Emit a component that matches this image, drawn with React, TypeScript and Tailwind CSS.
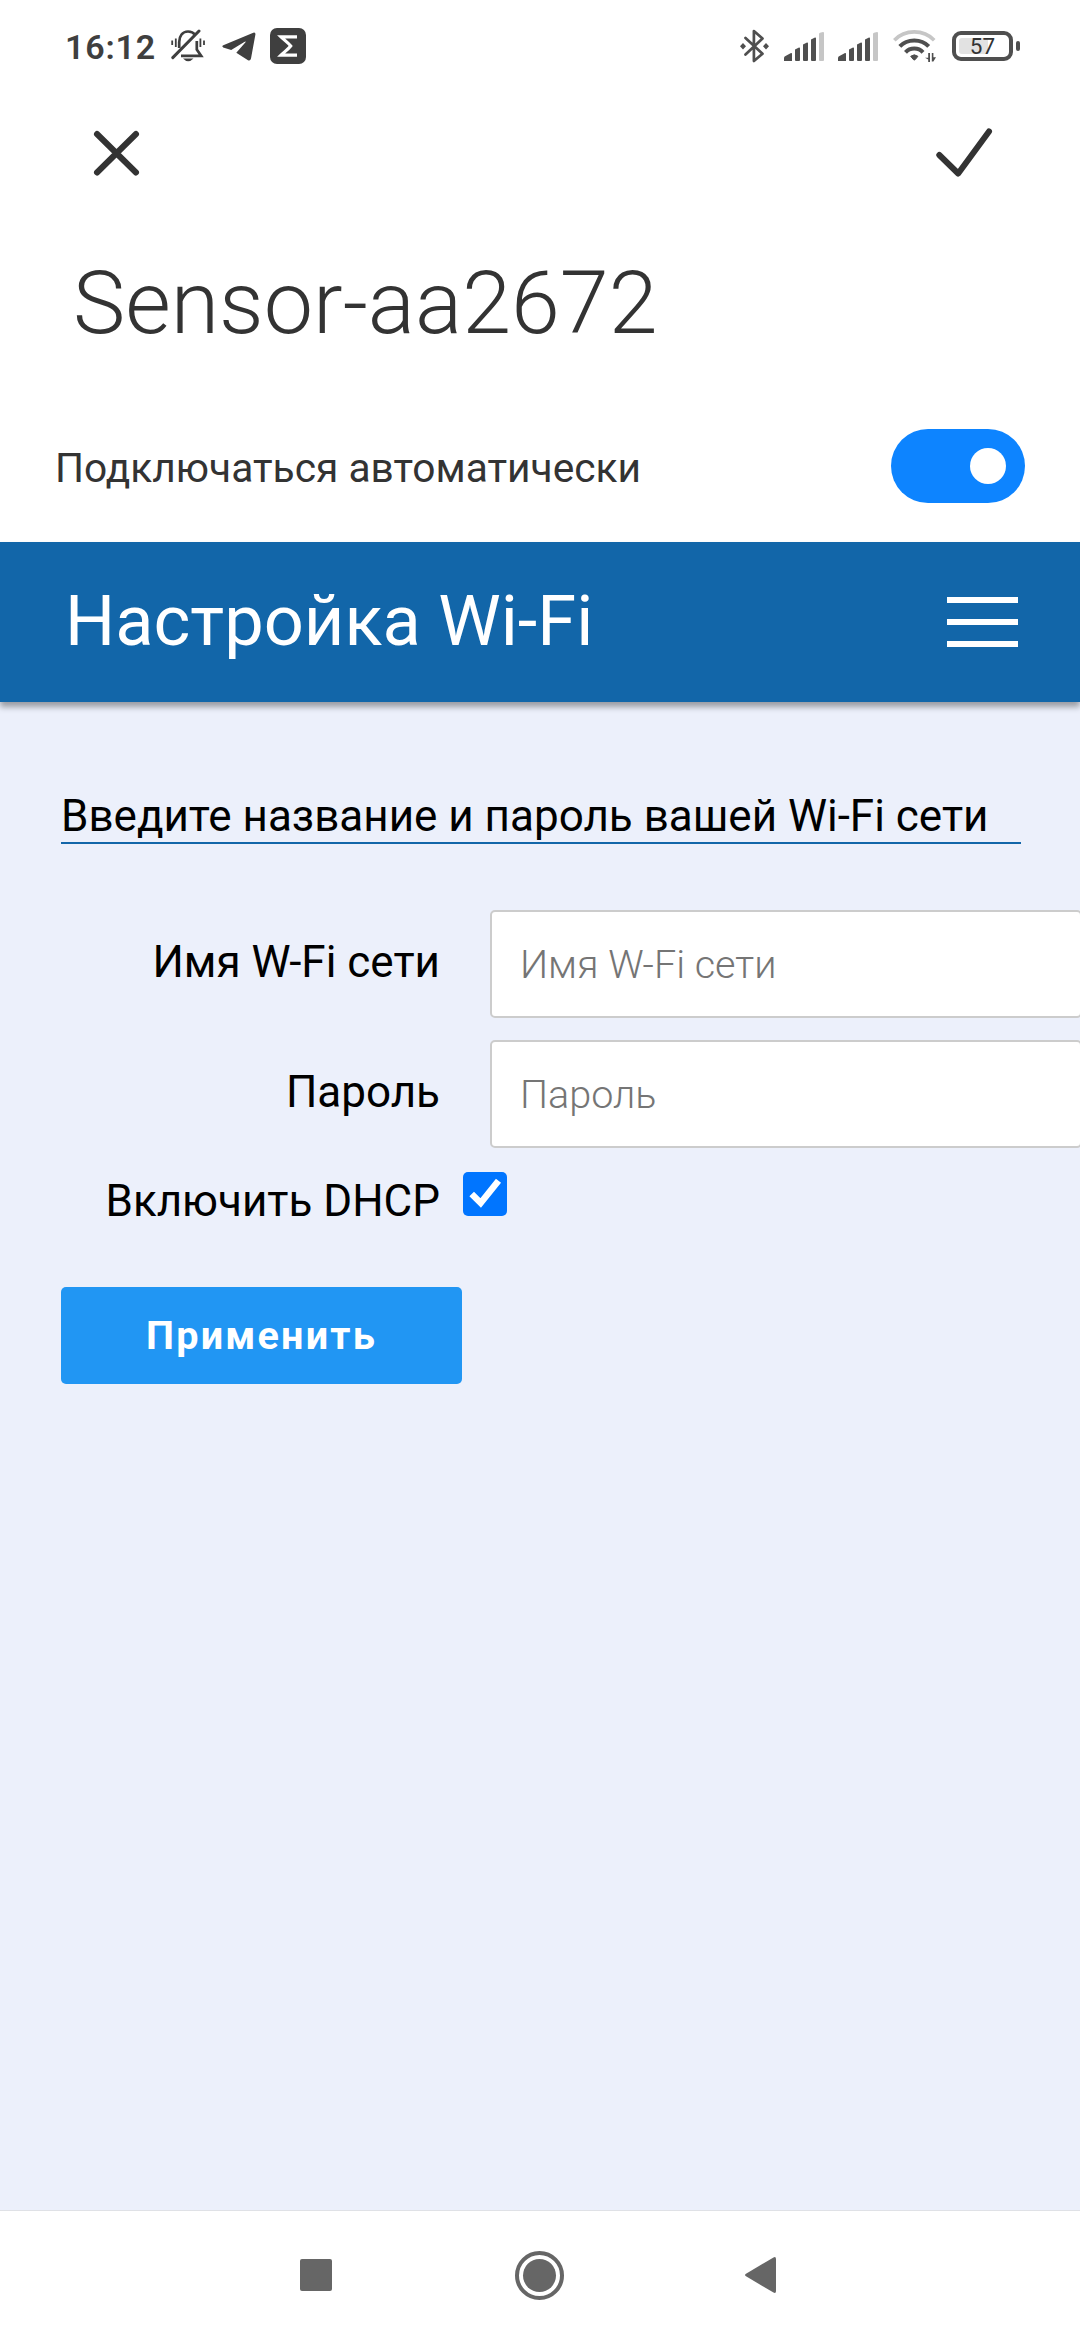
import { useState } from 'react';

const SIGNAL_BARS = [
  'M0 29 v-3 q0 -1.500 1.500 -2 l5.500 -3 q1 -.5 1 1 v7 z',
  'M11 17.500 l4 -2 q1 -.3 1 1 V28 q0 1 -1 1 h-3 q-1 0 -1 -1 z',
  'M19 12.500 l4 -2 q1 -.3 1 1 V28 q0 1 -1 1 h-3 q-1 0 -1 -1 z',
  'M27 7.500 l4 -2 q1 -.3 1 1 V28 q0 1 -1 1 h-3 q-1 0 -1 -1 z',
];

function BellOffIcon() {
  return (
    <svg width="34" height="34" viewBox="0 0 34 34" fill="none" stroke="#3f3f3f">
      <path d="M8.200 19 V13 C8.200 7 11.500 2.500 17 2.500 C20.300 2.500 22.700 3.800 24.300 5.800" strokeWidth="2.700" />
      <path d="M25.800 12 V20.500 L30.200 26.900 H10" strokeWidth="2.700" />
      <path d="M28 2 L1.800 28.600" strokeWidth="3" strokeLinecap="round" />
      <path d="M4.800 9.500 V18 M1.200 11.500 V16 M29.400 9.500 V18 M33 11.500 V16" strokeWidth="1.800" />
      <path d="M12 29.500 H22.500 Q17.200 35 12 29.500 Z" fill="#3f3f3f" stroke="none" />
    </svg>
  );
}

function TelegramIcon() {
  return (
    <svg width="34" height="29" viewBox="0 0 34 29" fill="#3f3f3f">
      <path d="M1.300 13.200 L31.300 0.700 Q33.700 0 33.400 2.600 L29 26.600 Q28.300 29.300 26 28.300 L14.300 20.700 L23.300 10.600 Q24.500 8.800 22.300 9.900 L9.200 18 L1.200 15.400 Q-.6 14.300 1.300 13.200 Z" />
    </svg>
  );
}

function SigmaIcon() {
  return (
    <svg width="36" height="36" viewBox="0 0 36 36">
      <rect width="36" height="36" rx="7" fill="#3f3f3f" />
      <path d="M27 8.900 H11 C14.500 12.300 18 14.500 20.700 18 C18 21.500 14.500 23.700 11 27.100 H27" fill="none" stroke="#fff" strokeWidth="3.200" />
    </svg>
  );
}

function BluetoothIcon() {
  return (
    <svg width="29" height="34" viewBox="0 0 29 34" fill="none" stroke="#4f4f4f" strokeWidth="2.700" strokeLinejoin="round">
      <path d="M5.500 9 L22.500 24.800 L13.900 32 V2 L22.500 9.500 L5.500 25.500" strokeLinecap="round" />
      <path d="M3 14 L6 17.200 L3 20.400 L0 17.200 Z M26 14 L29 17.200 L26 20.400 L23 17.200 Z" fill="#4f4f4f" stroke="none" />
    </svg>
  );
}

function SignalIcon() {
  return (
    <svg width="40" height="29" viewBox="0 0 40 29" fill="#4f4f4f">
      {SIGNAL_BARS.map((d) => (
        <path key={d} d={d} />
      ))}
      <path d="M35 2 Q35 1 36 .7 L39 0 Q40 0 40 1 V28 Q40 29 39 29 H36 Q35 29 35 28 Z" fill="#c6c6c6" />
    </svg>
  );
}

function WifiIcon() {
  return (
    <svg width="43" height="33" viewBox="0 0 43 33" fill="none">
      <path d="M1.300 10.200 C12 -.9 30.500 -.9 41.200 10.200" stroke="#c6c6c6" strokeWidth="3.600" />
      <path d="M6.800 16.300 C14.300 8.400 28.200 8.400 35.700 16.300" stroke="#4f4f4f" strokeWidth="4" />
      <path d="M12.500 22.300 C17 17.300 25.500 17.300 30 22.300" stroke="#4f4f4f" strokeWidth="4" />
      <path d="M17.700 26.300 Q21.300 23.300 24.900 26.300 L22.300 29.500 Q21.300 30.500 20.300 29.500 Z" fill="#4f4f4f" stroke="#4f4f4f" strokeWidth="1" />
      <path d="M35.200 23 H37 V32 H35.200 V29.500 L32 27.800 H35.200 Z M38.800 23 H40.400 V27.200 H43 L40.400 31.500 H38.800 Z" fill="#4f4f4f" />
    </svg>
  );
}

function Battery({ level }: { level: number }) {
  return (
    <div className="flex items-center gap-[3px]">
      <div className="relative flex h-[30px] w-[61px] items-center justify-center rounded-[9px] border-4 border-[#4f4f4f]">
        <div className="absolute top-[3px] bottom-[3px] left-[3px] w-[29px] rounded-[3px] bg-[#e2e2e2]" />
        <span className="relative text-[22.500px] leading-[22px] text-[#333]">{level}</span>
      </div>
      <div className="h-[10px] w-1 rounded-[2px] bg-[#4f4f4f]" />
    </div>
  );
}

function StatusBar() {
  return (
    <div className="flex h-[92px] items-center justify-between pr-[60px] pl-[65px]">
      <div className="flex items-center">
        <span className="w-[106px] pt-[2px] text-[34px] leading-10 font-semibold tracking-[0.8px] text-[#3f3f3f]">16:12</span>
        <BellOffIcon />
        <div className="w-[17px]" />
        <TelegramIcon />
        <div className="w-[14px]" />
        <SigmaIcon />
      </div>
      <div className="flex items-center">
        <BluetoothIcon />
        <div className="w-[15px]" />
        <SignalIcon />
        <div className="w-[14px]" />
        <SignalIcon />
        <div className="w-[15px]" />
        <WifiIcon />
        <div className="w-[16px]" />
        <Battery level={57} />
      </div>
    </div>
  );
}

function Field({ label, type = 'text' }: { label: string; type?: string }) {
  return (
    <div className="flex">
      <label className="mt-[26px] w-[379px] shrink-0 text-right text-[44px] leading-[52px]">{label}</label>
      <input
        type={type}
        placeholder={label}
        className="ml-[50px] h-[108px] w-[592px] shrink-0 rounded-[5px] border-2 border-[#ccc] bg-white px-[28px] text-[39.600px] font-light placeholder:text-[#757575] placeholder:opacity-100"
      />
    </div>
  );
}

function NavBar() {
  return (
    <nav className="flex h-[130px] shrink-0 items-start border-t border-[#dfe1e6] bg-white">
      <svg className="mt-[48px] ml-[300px]" width="32" height="32" viewBox="0 0 32 32">
        <rect width="32" height="32" rx="2" fill="#666" />
      </svg>
      <svg className="mt-[40px] ml-[183px]" width="49" height="49" viewBox="0 0 49 49" fill="#666">
        <circle cx="24.500" cy="24.500" r="22.500" fill="none" stroke="#666" strokeWidth="4" />
        <circle cx="24.500" cy="24.500" r="16.500" />
      </svg>
      <svg className="mt-[46px] ml-[181px]" width="31" height="36" viewBox="0 0 31 36" fill="#666">
        <path d="M.6 16.900 L28.500 .4 Q31 -.6 31 2 V34 Q31 36.600 28.500 35.600 L.6 19.100 Q-.5 18 .6 16.900 Z" />
      </svg>
    </nav>
  );
}

export default function App() {
  const [autoConnect, setAutoConnect] = useState(true);
  const [dhcp, setDhcp] = useState(true);

  return (
    <div className="flex h-[2340px] w-[1080px] flex-col overflow-hidden bg-white font-['Roboto',sans-serif] text-black">
      <StatusBar />

      <div className="flex h-[159px] justify-between pt-[36px] pr-[84px] pl-[91px] text-[#333]">
        <button className="h-[50px] w-[50px]" aria-label="Закрыть">
          <svg width="50" height="50" viewBox="0 0 50 50" fill="none" stroke="#333" strokeWidth="6" strokeLinecap="round">
            <path d="M6 6 L45 44.500 M45 6 L6 44.500" />
          </svg>
        </button>
        <button className="h-[50px] w-[60px]" aria-label="Готово">
          <svg width="60" height="50" viewBox="0 0 60 50" fill="none" stroke="#333" strokeWidth="6" strokeLinecap="round" strokeLinejoin="round">
            <path d="M3.300 27 L22.200 45.500 L53 3.500" />
          </svg>
        </button>
      </div>

      <h1 className="pl-[73px] text-[88px] leading-[104px] font-light text-[#333]">Sensor-aa2672</h1>

      <div className="mt-[74px] flex h-[113px] items-start justify-between pr-[55px] pl-[55px]">
        <span className="pt-[16px] text-[40.700px] leading-[46px] text-[#333]">Подключаться автоматически</span>
        <button
          role="switch"
          aria-checked={autoConnect}
          onClick={() => setAutoConnect(!autoConnect)}
          className={`flex h-[74px] w-[134px] items-center rounded-full px-[19px] ${autoConnect ? 'justify-end bg-[#0d84ff]' : 'justify-start bg-gray-300'}`}
        >
          <span className="h-9 w-9 rounded-full bg-white" />
        </button>
      </div>

      <header className="relative z-10 flex h-[160px] shrink-0 items-center justify-between bg-[#1266a9] pr-[62px] pl-[65px] shadow-[0_5px_6px_rgba(0,0,0,0.35)]">
        <h2 className="pb-[2px] text-[70.400px] leading-[82px] text-white">Настройка Wi-Fi</h2>
        <div className="flex flex-col gap-4">
          <span className="h-1.5 w-[71px] bg-white" />
          <span className="h-1.5 w-[71px] bg-white" />
          <span className="h-1.5 w-[71px] bg-white" />
        </div>
      </header>

      <main className="flex-1 bg-[#ecf0fb] pt-[88px] pl-[61px]">
        <p className="w-[960px] border-b-2 border-[#1266a9] text-[44px] leading-[52px] whitespace-nowrap">
          Введите название и пароль вашей Wi-Fi сети
        </p>

        <div className="mt-[66px] flex flex-col gap-[22px]">
          <Field label="Имя W-Fi сети" />
          <Field label="Пароль" type="password" />
        </div>

        <div className="mt-[24px] flex h-[55px]">
          <label className="mt-[3px] w-[379px] text-right text-[44px] leading-[52px]">Включить DHCP</label>
          <button
            role="checkbox"
            aria-checked={dhcp}
            onClick={() => setDhcp(!dhcp)}
            className="ml-[23px] h-[44px] w-[44px] rounded-[5px] bg-[#0075ff]"
          >
            {dhcp && (
              <svg width="44" height="44" viewBox="0 0 44 44" fill="none" stroke="#fff" strokeWidth="6.500">
                <path d="M8.700 22 L17.700 31 L35.500 8.800" />
              </svg>
            )}
          </button>
        </div>

        <button className="mt-[60px] h-[97px] w-[401px] rounded-[5px] bg-[#2196f3] text-[39.600px] font-bold tracking-[2.200px] text-white">
          Применить
        </button>
      </main>

      <NavBar />
    </div>
  );
}
